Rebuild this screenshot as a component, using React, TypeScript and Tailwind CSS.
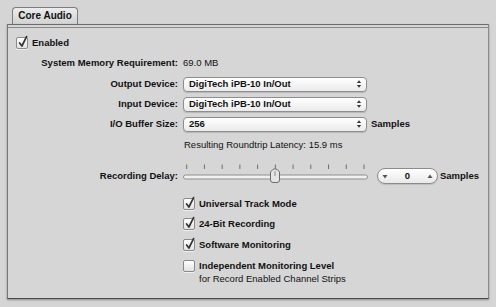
import type { ReactNode } from 'react';

const font = { fontFamily: '"Liberation Sans", Arial, sans-serif' };

function Check({ on }: { on: boolean }) {
  return (
    <span className="relative block h-[12px] w-[12px] shrink-0 rounded-[2px] border border-[#8a8a8a] bg-gradient-to-b from-white to-[#e2e2e2] shadow-[0_1px_0_rgba(255,255,255,0.6)]">
      {on ? (
        <svg className="absolute left-[0px] top-[-3px]" width="13" height="14" viewBox="0 0 13 14">
          <path d="M2.6 8 L4.9 11 L9.6 1.6" fill="none" stroke="#333" strokeWidth="1.7" strokeLinecap="round" strokeLinejoin="round" />
        </svg>
      ) : null}
    </span>
  );
}

function CheckRow({ on, children }: { on: boolean; children: ReactNode }) {
  return (
    <div className="flex h-[20px] items-center gap-[4px] pl-[175px] font-bold">
      <Check on={on} />
      <span>{children}</span>
    </div>
  );
}

function Label({ children }: { children: ReactNode }) {
  return <div className="w-[170px] shrink-0 text-right font-bold">{children}</div>;
}

function Popup({ value }: { value: string }) {
  return (
    <div className="flex h-[15px] w-[184px] items-center justify-between rounded-[4px] border border-[#8e8e8e] bg-gradient-to-b from-white to-[#ebebeb] pl-[5px] pr-[4px] font-bold shadow-[0_1px_1px_rgba(0,0,0,0.15)]">
      <span className="leading-none">{value}</span>
      <svg width="6" height="10" viewBox="0 0 6 10">
        <path d="M0.8 4 L3 1.2 L5.2 4 Z" fill="#3a3a3a" />
        <path d="M0.8 6 L3 8.8 L5.2 6 Z" fill="#3a3a3a" />
      </svg>
    </div>
  );
}

function Slider() {
  const ticks = Array.from({ length: 11 }, (_, i) => 3.7 + i * 17.73);
  return (
    <svg width="186" height="22" viewBox="0 0 186 22" className="shrink-0">
      {ticks.map((x, i) => (
        <line key={i} x1={x} x2={x} y1="1.5" y2="6" stroke="#6e6e6e" strokeWidth="1" />
      ))}
      <rect x="0.5" y="12" width="184" height="4" rx="2" fill="#f0f0f0" stroke="#8e8e8e" />
      <path
        d="M87.5 9 Q92 2.5 96.5 9 V17 Q96.5 19.5 94 19.5 H90 Q87.5 19.5 87.5 17 Z"
        fill="#e4e4e4"
        stroke="#6c6c6c"
      />
      <line x1="92" x2="92" y1="8" y2="13" stroke="#8a8a8a" />
    </svg>
  );
}

function Stepper() {
  return (
    <div className="flex h-[16px] w-[61px] items-center justify-between rounded-full border border-[#8c8c8c] bg-gradient-to-b from-white to-[#e9e9e9] px-[4px] font-bold shadow-[0_1px_1px_rgba(0,0,0,0.12)]">
      <svg width="6" height="5" viewBox="0 0 6 5">
        <path d="M0.5 1 L5.5 1 L3 4.5 Z" fill="#555" />
      </svg>
      <span className="leading-none">0</span>
      <svg width="6" height="5" viewBox="0 0 6 5">
        <path d="M0.5 4 L5.5 4 L3 0.5 Z" fill="#555" />
      </svg>
    </div>
  );
}

export default function App() {
  return (
    <div
      className="h-[307px] w-[496px] overflow-hidden bg-[#d5d5d5] pl-[7px] pt-[7px] text-[9.5px] leading-[14px] text-[#111]"
      style={font}
    >
      <div className="ml-[5px] flex h-[17px] w-[66px] items-center justify-center rounded-t-[4px] border border-b-0 border-[#7c7c7c] bg-gradient-to-b from-[#ececec] to-[#d2d2d2] text-[10px] font-bold">
        Core Audio
      </div>

      <div className="h-[275px] w-[482px] border border-b-[#4a4a4a] border-l-[#777] border-r-[#8a8a8a] border-t-[#6a6a6a] bg-[#d6d6d6] pt-[8px] shadow-[inset_0_2px_0_#d6d6d6,inset_0_3px_0_#8a8a8a,0_1px_2px_rgba(0,0,0,0.35)]">
        <div className="flex h-[20px] items-center gap-[4px] pl-[8px] font-bold">
          <Check on />
          <span>Enabled</span>
        </div>

        <div className="flex h-[20px] items-center gap-[5px]">
          <Label>System Memory Requirement:</Label>
          <span>69.0 MB</span>
        </div>

        <div className="mt-[1px] flex h-[20px] items-center gap-[5px]">
          <Label>Output Device:</Label>
          <Popup value="DigiTech iPB-10 In/Out" />
        </div>
        <div className="flex h-[20px] items-center gap-[5px]">
          <Label>Input Device:</Label>
          <Popup value="DigiTech iPB-10 In/Out" />
        </div>
        <div className="flex h-[20px] items-center gap-[5px]">
          <Label>I/O Buffer Size:</Label>
          <Popup value="256" />
          <span className="-ml-[1px] font-bold">Samples</span>
        </div>

        <div className="mt-[1px] flex h-[20px] items-center gap-[5px]">
          <div className="w-[170px] shrink-0" />
          <span className="ml-[1px]">Resulting Roundtrip Latency: 15.9 ms</span>
        </div>

        <div className="mt-[8px] flex h-[26px] items-start gap-[5px]">
          <div className="mt-[6px] w-[170px] shrink-0 text-right font-bold">Recording Delay:</div>
          <Slider />
          <div className="ml-[3px] mt-[5px] flex items-center gap-[2px]">
            <Stepper />
            <span className="font-bold">Samples</span>
          </div>
        </div>

        <div className="mt-[5px]">
          <CheckRow on>Universal Track Mode</CheckRow>
          <CheckRow on>24-Bit Recording</CheckRow>
          <div className="mt-[1px]">
            <CheckRow on>Software Monitoring</CheckRow>
          </div>
          <div className="mt-[4px] flex items-start gap-[4px] pl-[175px] leading-[13px]">
            <div className="pt-[1px]">
              <Check on={false} />
            </div>
            <div>
              <div className="font-bold">Independent Monitoring Level</div>
              <div>for Record Enabled Channel Strips</div>
            </div>
          </div>
        </div>
      </div>
    </div>
  );
}
